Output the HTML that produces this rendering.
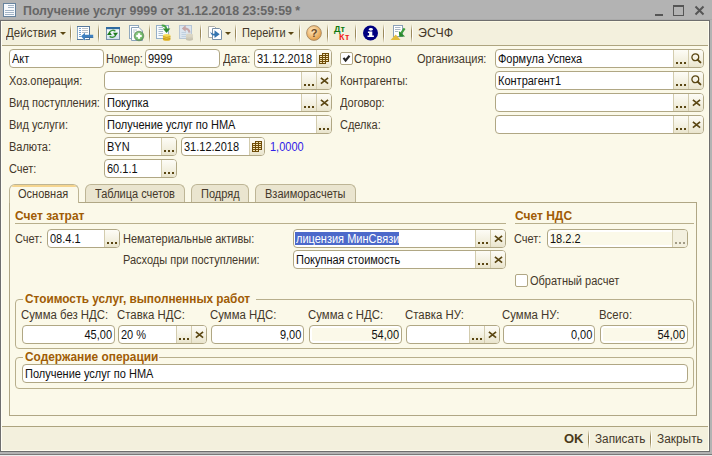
<!DOCTYPE html><html><head><meta charset="utf-8"><style>
*{margin:0;padding:0;box-sizing:border-box}
html,body{width:712px;height:456px;overflow:hidden;background:#B3B3B3;font-family:"Liberation Sans",sans-serif;font-size:11px}
.lb,.ttl,.gt{position:absolute;white-space:nowrap;color:#44382A}
.frame{position:absolute;left:0;top:20px;width:710px;height:432px;border:1px solid #6E6E6E;background:#FBF9E9}
.tb{position:absolute;left:1px;top:21px;width:708px;height:25px;box-shadow:inset 0 1px 0 #FCF9E4;background:#F3F0DD;border-bottom:1px solid #ADA47F}
.bb{position:absolute;left:1px;top:426px;width:708px;height:25px;background:#F3F0DD;border-top:1px solid #ADA47F}
.f{position:absolute;border:1px solid #B0A784;border-radius:4px;background:#fff;overflow:hidden}
.f.ro{background:#FBF9E9;box-shadow:inset 0 0 0 2px #fff}
.ft{position:absolute;left:2px;top:0;height:17px;line-height:17px;color:#101010;white-space:nowrap;overflow:hidden}
.sel{background:#4C69CA;color:#fff;display:inline-block;height:13px;line-height:13px;margin-top:2px;padding-left:1px;margin-left:-1px}
.bt{position:absolute;top:0;width:15px;height:17px;border-left:1px solid #D3CCAE;background:linear-gradient(#FDFCF6,#F3F0E0 60%,#E9E4CC)}
.bt.rob{background:#F3F0DF}
.dt{position:absolute;width:2px;height:2px}
.ic{position:absolute}
.cb{position:absolute;width:13px;height:13px;border:1px solid #B0A784;border-radius:2px;background:#fff}
.tab{position:absolute;top:184px;height:18px;border:1px solid #BDB595;border-bottom:none;border-radius:6px 6px 0 0;background:#EAE5CF}
.tab.act{background:#FBF9E9;height:19px;z-index:1}
.lb{z-index:3}
.panel{position:absolute;left:9px;top:202px;width:688px;height:214px;border:1px solid #B0A785}
.grp{position:absolute;border:1px solid #B8AF8C;border-radius:4px}
.hl{position:absolute;height:1px;background:#B8AF8C}
.sep{position:absolute;top:24px;width:2px;height:19px;background:linear-gradient(90deg,transparent 0 0),linear-gradient(rgba(150,132,85,0),rgba(150,132,85,.95) 35%,rgba(150,132,85,.95) 65%,rgba(150,132,85,0)) 0 0/1px 100% no-repeat,linear-gradient(rgba(255,255,255,0),#fff 30%,#fff 70%,rgba(255,255,255,0)) 1px 0/1px 100% no-repeat}
</style></head><body>
<svg style="position:absolute;left:0;top:0" width="20" height="20" viewBox="0 0 20 20">
<rect x="3.5" y="3.5" width="12" height="13" fill="#F7F9FC" stroke="#67839E"/>
<path d="M8 5.5H14M8 7.5H14M5 10.5H14M5 12.5H14M5 14.5H14" stroke="#A3B4C6"/>
</svg>
<div class="ttl" style="top:5px;line-height:13px;font-size:12.5px;transform:scaleX(0.988);transform-origin:0 0;left:23px;font-weight:bold;color:#666666;">Получение услуг 9999 от 31.12.2018 23:59:59 *</div>
<div style="position:absolute;left:655px;top:14px;width:8px;height:2px;background:#555"></div>
<div style="position:absolute;left:673px;top:5px;width:11px;height:11px;border:1px solid #555;border-top-width:2px"></div>
<svg style="position:absolute;left:694px;top:5px" width="11" height="11" viewBox="0 0 11 11"><path d="M1.5 1.5L9.5 9.5M9.5 1.5L1.5 9.5" stroke="#555" stroke-width="2"/></svg>
<div style="position:absolute;left:0;top:19px;width:712px;height:1px;background:#AAAAAA"></div>
<div class="frame"></div>
<div class="tb"></div>
<div class="bb"></div>
<div style="position:absolute;left:1px;top:21px;width:708px;height:430px;box-shadow:inset 1px 0 0 #FFFEF4,inset -1px -1px 0 #FFFDEE;z-index:5"></div>
<div style="position:absolute;left:0;top:454px;width:712px;height:1px;background:#7A7A7A"></div><div style="position:absolute;left:0;top:455px;width:712px;height:1px;background:#EDEDED"></div>
<div class="lb" style="top:27px;line-height:13px;font-size:12px;transform:scaleX(0.96);left:6px;transform-origin:0 0;color:#44382A;">Действия</div>
<svg class="ic" style="left:60px;top:32px" width="6" height="3"><path d="M0 0H6L3 3Z" fill="#5A4612"/></svg>
<div class="sep" style="left:70px"></div>
<div class="sep" style="left:98px"></div>
<div class="sep" style="left:149px"></div>
<div class="sep" style="left:200px"></div>
<div class="sep" style="left:235px"></div>
<div class="sep" style="left:299px"></div>
<div class="sep" style="left:327px"></div>
<div class="sep" style="left:355px"></div>
<div class="sep" style="left:383px"></div>
<div class="sep" style="left:411px"></div>
<svg class="ic" style="left:74px;top:23px" width="22" height="20" viewBox="0 0 22 20">
<rect x="3.5" y="3.5" width="12" height="13" fill="#FFFFFF" stroke="#86A6C6"/>
<path d="M3 3.5H16M15.5 3V17M3 16.5H9M12 16.5H16" stroke="#56789C" stroke-width="1"/>
<path d="M5 5.5H7M5 7.5H7M5 9.5H7M5 11.5H7M5 13.5H7" stroke="#78A2D0"/>
<path d="M8 5.5H14M8 7.5H14M8 9.5H14" stroke="#BAC0C6"/>
<path d="M7 13.3L11 9.8V11.8H19.2V14.8H11V17.6Z" fill="#3F80C0"/>
<path d="M11 14H19.2V14.8H11Z" fill="#2E66A0"/>
</svg>
<svg class="ic" style="left:102px;top:23px" width="22" height="20" viewBox="0 0 22 20">
<defs><linearGradient id="wg" x1="0" y1="0" x2="0" y2="1"><stop offset="0" stop-color="#FFFFFF"/><stop offset="1" stop-color="#CFE0F0"/></linearGradient></defs>
<rect x="4.5" y="4.5" width="13" height="12" fill="url(#wg)" stroke="#7B93AB"/>
<rect x="4" y="4" width="14" height="2.2" fill="#2F6AA0"/>
<path d="M7.6 9.2A3.9 3.9 0 0 1 13.4 8.2" fill="none" stroke="#3C963C" stroke-width="1.4"/>
<path d="M13.4 12.6A3.9 3.9 0 0 1 7.6 13.4" fill="none" stroke="#3C963C" stroke-width="1.4"/>
<path d="M5 11.9L7.45 8.6L9.9 11.9Z" fill="#1A7A1A"/>
<path d="M11 9.8H16L13.5 13.3Z" fill="#1A7A1A"/>
</svg>
<svg class="ic" style="left:124px;top:22px" width="24" height="22" viewBox="0 0 24 22">
<defs><radialGradient id="pg" cx="0.45" cy="0.45" r="0.6"><stop offset="0" stop-color="#B8E0B0"/><stop offset="0.6" stop-color="#78BE70"/><stop offset="1" stop-color="#4E9848"/></radialGradient></defs>
<rect x="5.5" y="3.5" width="9" height="13" fill="#FFFFFF" stroke="#90A8BE"/>
<path d="M7.5 5.5H15L18.5 9V18.5H7.5Z" fill="#FFFFFF" stroke="#8AA2BA"/>
<path d="M9 8H13M9 10H11" stroke="#B8C4D0"/>
<circle cx="15" cy="14" r="4.8" fill="url(#pg)" stroke="#6A8E68" stroke-width="0.8"/>
<path d="M15 11.3V16.7M12.3 14H17.7" stroke="#FFFFFF" stroke-width="2.1"/>
</svg>
<svg class="ic" style="left:152px;top:22px" width="24" height="22" viewBox="0 0 24 22">
<rect x="4.5" y="3.5" width="12" height="13" fill="#F8FBFD" stroke="#95AFC8"/>
<path d="M6.5 5.5H11M6.5 7.5H11M6.5 9.5H11M6.5 11.5H11M6.5 13.5H11" stroke="#A9BDD0"/>
<path d="M9.7 3.6Q13.5 3 14.5 7" fill="none" stroke="#48A448" stroke-width="1.8"/>
<path d="M10.8 6.6H18.3L14.5 11Z" fill="#2E8A2E"/>
<ellipse cx="14.7" cy="17.2" rx="3.8" ry="1.6" fill="#E0B020"/>
<ellipse cx="14.7" cy="15.4" rx="3.8" ry="1.6" fill="#F2CC38"/>
<ellipse cx="14.7" cy="13.6" rx="3.8" ry="1.6" fill="#F8DC58"/>
<path d="M10.9 14.5Q14.7 16.2 18.5 14.5M10.9 16.3Q14.7 18 18.5 16.3" fill="none" stroke="#B88A18" stroke-width="0.7"/>
</svg>
<svg class="ic" style="left:176px;top:22px" width="24" height="22" viewBox="0 0 24 22">
<rect x="3.5" y="3.5" width="12" height="13" fill="#DCE5EE" stroke="#B7C6D5"/>
<path d="M5.5 10.5H10M5.5 12.5H10M5.5 14.5H10" stroke="#BFD0E0"/>
<path d="M13.5 10.6Q13 6.5 8.5 6.5" fill="none" stroke="#C8A8A8" stroke-width="2.2"/>
<path d="M5.8 6.4L9.7 3.1V9.7Z" fill="#C6A6A6"/>
<ellipse cx="13.5" cy="17" rx="3.6" ry="1.7" fill="#C7C2B0"/>
<ellipse cx="13.5" cy="15.1" rx="3.6" ry="1.7" fill="#D2CDBB"/>
<ellipse cx="13.5" cy="13.2" rx="3.6" ry="1.7" fill="#DAD5C4"/>
</svg>
<svg class="ic" style="left:204px;top:22px" width="22" height="22" viewBox="0 0 22 22">
<path d="M4.5 4.5H10.5L12 6V15.5H4.5Z" fill="#FFFFFF" stroke="#B0B0A8"/>
<path d="M8.5 6.5H15.5L17.5 8.5V17.5H8.5Z" fill="#FFFFFF" stroke="#7890A8"/>
<path d="M6.3 9.6Q7.5 12.3 10.5 11.5V8.3L15.7 12.3L10.5 15.9V13.4Q7 14 6.3 9.6Z" fill="#3575B0"/>
</svg>
<svg class="ic" style="left:225px;top:32px" width="6" height="3"><path d="M0 0H6L3 3Z" fill="#5A4612"/></svg>
<div class="lb" style="top:27px;line-height:13px;font-size:12px;transform:scaleX(0.9167);left:242px;transform-origin:0 0;">Перейти</div>
<svg class="ic" style="left:288px;top:32px" width="6" height="3"><path d="M0 0H6L3 3Z" fill="#5A4612"/></svg>
<svg class="ic" style="left:306px;top:25px" width="16" height="16" viewBox="0 0 16 16">
<defs><radialGradient id="hg" cx="0.4" cy="0.35" r="0.7"><stop offset="0" stop-color="#FFE9C2"/><stop offset="1" stop-color="#E3993F"/></radialGradient></defs>
<circle cx="8" cy="8" r="7.4" fill="url(#hg)" stroke="#9A8060" stroke-width="0.8"/>
<text x="8" y="12.2" text-anchor="middle" font-family="Liberation Sans" font-weight="bold" font-size="11" fill="#6A4A28">?</text>
</svg>
<div class="lb" style="left:334px;top:24px;font-size:9px;font-weight:bold;color:#0F7A0F;line-height:10px">Дт</div>
<div class="lb" style="left:339px;top:32px;font-size:9px;font-weight:bold;color:#F01E1E;line-height:10px;letter-spacing:0.6px">Кт</div>
<svg class="ic" style="left:363px;top:25px" width="16" height="16" viewBox="0 0 16 16">
<circle cx="7.5" cy="8" r="7.5" fill="#000080"/>
<ellipse cx="7.9" cy="4.3" rx="2" ry="1.4" fill="#fff"/>
<path d="M4.9 6.5H9.3V10.5H10.9V12H4.5V10.5H6.1V8H4.9Z" fill="#fff"/>
</svg>
<svg class="ic" style="left:386px;top:22px" width="24" height="22" viewBox="0 0 24 22">
<rect x="7.5" y="3.5" width="9" height="11" fill="#FFFFFF" stroke="#8AA0B8"/>
<path d="M9 5.5H14.5M9 7.5H14.5M9 9.5H12" stroke="#A9B6C4"/>
<path d="M4.6 17.9L9.7 12.6L14.5 17.9Z" fill="#E2BC3C"/>
<path d="M18.6 6.3L15 11.5" stroke="#3F9F3F" stroke-width="2.2"/>
<path d="M12.8 8.9L13.3 14.7L19.1 14.4Z" fill="#2A8A2A"/>
</svg>
<div class="lb" style="top:27px;line-height:13px;font-size:12px;transform:scaleX(1.03);left:418px;transform-origin:0 0;">ЭСЧФ</div>
<div class="f" style="left:9px;top:49px;width:95px;height:19px">
</div>
<div class="lb" style="top:53px;line-height:13px;font-size:12px;transform:scaleX(0.9167);left:12px;transform-origin:0 0;color:#101010;">Акт</div>
<div class="lb" style="top:53px;line-height:13px;font-size:12px;transform:scaleX(0.9167);left:106px;transform-origin:0 0;">Номер:</div>
<div class="f" style="left:145px;top:49px;width:75px;height:19px">
</div>
<div class="lb" style="top:53px;line-height:13px;font-size:12px;transform:scaleX(0.9167);left:148px;transform-origin:0 0;color:#101010;">9999</div>
<div class="lb" style="top:53px;line-height:13px;font-size:12px;transform:scaleX(0.9167);left:223px;transform-origin:0 0;">Дата:</div>
<div class="f" style="left:254px;top:49px;width:78px;height:19px">
<div class="bt" style="left:61px;">
<svg class="ic" style="left:2px;top:3px" width="11" height="11" viewBox="0 0 11 11" shape-rendering="crispEdges"><path d="M3 0H10V9H7V11H0V2H3Z" fill="#6E4C08"/><rect x="4" y="1" width="2" height="1" fill="#F3E3B3"/><rect x="7" y="1" width="2" height="1" fill="#F3E3B3"/><rect x="1" y="3" width="2" height="1" fill="#F3E3B3"/><rect x="4" y="3" width="2" height="1" fill="#F3E3B3"/><rect x="7" y="3" width="2" height="1" fill="#F3E3B3"/><rect x="1" y="5" width="2" height="1" fill="#F3E3B3"/><rect x="4" y="5" width="2" height="1" fill="#F3E3B3"/><rect x="7" y="5" width="2" height="1" fill="#F3E3B3"/><rect x="1" y="7" width="2" height="1" fill="#F3E3B3"/><rect x="4" y="7" width="2" height="1" fill="#F3E3B3"/><rect x="7" y="7" width="2" height="1" fill="#F3E3B3"/><rect x="1" y="9" width="2" height="1" fill="#F3E3B3"/><rect x="4" y="9" width="2" height="1" fill="#F3E3B3"/></svg>
</div>
</div>
<div class="lb" style="top:53px;line-height:13px;font-size:12px;transform:scaleX(0.9167);left:257px;transform-origin:0 0;color:#101010;">31.12.2018</div>
<div class="cb" style="left:340px;top:52px">
<svg width="11" height="11" viewBox="0 0 11 11" style="position:absolute;left:0;top:0"><path d="M2.5 4.9L4.6 7.5L8.5 2.7" fill="none" stroke="#262626" stroke-width="2.2"/></svg>
</div>
<div class="lb" style="top:53px;line-height:13px;font-size:12px;transform:scaleX(0.9167);left:354px;transform-origin:0 0;">Сторно</div>
<div class="lb" style="top:53px;line-height:13px;font-size:12px;transform:scaleX(0.9167);left:417px;transform-origin:0 0;">Организация:</div>
<div class="f" style="left:495px;top:49px;width:209px;height:19px">
<div class="bt" style="left:177px;">
<i class="dt" style="left:2px;top:12px;background:#5A4612"></i><i class="dt" style="left:6px;top:12px;background:#5A4612"></i><i class="dt" style="left:10px;top:12px;background:#5A4612"></i>
</div>
<div class="bt" style="left:192px;">
<svg class="ic" style="left:2px;top:3px" width="11" height="11" viewBox="0 0 11 11"><circle cx="4.3" cy="4.3" r="3.4" fill="none" stroke="#5A4612" stroke-width="1.3"/><path d="M6.6 6.6L9.4 9.4" stroke="#5A4612" stroke-width="2" stroke-linecap="round"/></svg>
</div>
</div>
<div class="lb" style="top:53px;line-height:13px;font-size:12px;transform:scaleX(0.9167);left:498px;transform-origin:0 0;color:#101010;">Формула Успеха</div>
<div class="lb" style="top:75px;line-height:13px;font-size:12px;transform:scaleX(0.9167);left:9px;transform-origin:0 0;">Хоз.операция:</div>
<div class="f" style="left:104px;top:71px;width:228px;height:19px">
<div class="bt" style="left:196px;">
<i class="dt" style="left:2px;top:12px;background:#5A4612"></i><i class="dt" style="left:6px;top:12px;background:#5A4612"></i><i class="dt" style="left:10px;top:12px;background:#5A4612"></i>
</div>
<div class="bt" style="left:211px;">
<svg class="ic" style="left:3px;top:5px" width="9" height="8" viewBox="0 0 9 8"><path d="M0.9 0.9L8.1 6.6M8.1 0.9L0.9 6.6" stroke="#5A4612" stroke-width="1.7"/></svg>
</div>
</div>
<div class="lb" style="top:75px;line-height:13px;font-size:12px;transform:scaleX(0.9167);left:340px;transform-origin:0 0;">Контрагенты:</div>
<div class="f" style="left:495px;top:71px;width:209px;height:19px">
<div class="bt" style="left:177px;">
<i class="dt" style="left:2px;top:12px;background:#5A4612"></i><i class="dt" style="left:6px;top:12px;background:#5A4612"></i><i class="dt" style="left:10px;top:12px;background:#5A4612"></i>
</div>
<div class="bt" style="left:192px;">
<svg class="ic" style="left:2px;top:3px" width="11" height="11" viewBox="0 0 11 11"><circle cx="4.3" cy="4.3" r="3.4" fill="none" stroke="#5A4612" stroke-width="1.3"/><path d="M6.6 6.6L9.4 9.4" stroke="#5A4612" stroke-width="2" stroke-linecap="round"/></svg>
</div>
</div>
<div class="lb" style="top:75px;line-height:13px;font-size:12px;transform:scaleX(0.9167);left:498px;transform-origin:0 0;color:#101010;">Контрагент1</div>
<div class="lb" style="top:97px;line-height:13px;font-size:12px;transform:scaleX(0.9167);left:9px;transform-origin:0 0;">Вид поступления:</div>
<div class="f" style="left:104px;top:93px;width:228px;height:19px">
<div class="bt" style="left:196px;">
<i class="dt" style="left:2px;top:12px;background:#5A4612"></i><i class="dt" style="left:6px;top:12px;background:#5A4612"></i><i class="dt" style="left:10px;top:12px;background:#5A4612"></i>
</div>
<div class="bt" style="left:211px;">
<svg class="ic" style="left:3px;top:5px" width="9" height="8" viewBox="0 0 9 8"><path d="M0.9 0.9L8.1 6.6M8.1 0.9L0.9 6.6" stroke="#5A4612" stroke-width="1.7"/></svg>
</div>
</div>
<div class="lb" style="top:97px;line-height:13px;font-size:12px;transform:scaleX(0.9167);left:107px;transform-origin:0 0;color:#101010;">Покупка</div>
<div class="lb" style="top:97px;line-height:13px;font-size:12px;transform:scaleX(0.9167);left:340px;transform-origin:0 0;">Договор:</div>
<div class="f" style="left:495px;top:93px;width:209px;height:19px">
<div class="bt" style="left:177px;">
<i class="dt" style="left:2px;top:12px;background:#5A4612"></i><i class="dt" style="left:6px;top:12px;background:#5A4612"></i><i class="dt" style="left:10px;top:12px;background:#5A4612"></i>
</div>
<div class="bt" style="left:192px;">
<svg class="ic" style="left:3px;top:5px" width="9" height="8" viewBox="0 0 9 8"><path d="M0.9 0.9L8.1 6.6M8.1 0.9L0.9 6.6" stroke="#5A4612" stroke-width="1.7"/></svg>
</div>
</div>
<div class="lb" style="top:119px;line-height:13px;font-size:12px;transform:scaleX(0.9167);left:9px;transform-origin:0 0;">Вид услуги:</div>
<div class="f" style="left:104px;top:115px;width:228px;height:19px">
<div class="bt" style="left:211px;">
<i class="dt" style="left:2px;top:12px;background:#5A4612"></i><i class="dt" style="left:6px;top:12px;background:#5A4612"></i><i class="dt" style="left:10px;top:12px;background:#5A4612"></i>
</div>
</div>
<div class="lb" style="top:119px;line-height:13px;font-size:12px;transform:scaleX(0.9167);left:107px;transform-origin:0 0;color:#101010;">Получение услуг по НМА</div>
<div class="lb" style="top:119px;line-height:13px;font-size:12px;transform:scaleX(0.9167);left:340px;transform-origin:0 0;">Сделка:</div>
<div class="f" style="left:495px;top:115px;width:209px;height:19px">
<div class="bt" style="left:177px;">
<i class="dt" style="left:2px;top:12px;background:#5A4612"></i><i class="dt" style="left:6px;top:12px;background:#5A4612"></i><i class="dt" style="left:10px;top:12px;background:#5A4612"></i>
</div>
<div class="bt" style="left:192px;">
<svg class="ic" style="left:3px;top:5px" width="9" height="8" viewBox="0 0 9 8"><path d="M0.9 0.9L8.1 6.6M8.1 0.9L0.9 6.6" stroke="#5A4612" stroke-width="1.7"/></svg>
</div>
</div>
<div class="lb" style="top:141px;line-height:13px;font-size:12px;transform:scaleX(0.9167);left:9px;transform-origin:0 0;">Валюта:</div>
<div class="f" style="left:104px;top:137px;width:73px;height:19px">
<div class="bt" style="left:56px;">
<i class="dt" style="left:2px;top:12px;background:#5A4612"></i><i class="dt" style="left:6px;top:12px;background:#5A4612"></i><i class="dt" style="left:10px;top:12px;background:#5A4612"></i>
</div>
</div>
<div class="lb" style="top:141px;line-height:13px;font-size:12px;transform:scaleX(0.9167);left:107px;transform-origin:0 0;color:#101010;">BYN</div>
<div class="f" style="left:181px;top:137px;width:84px;height:19px">
<div class="bt" style="left:67px;">
<svg class="ic" style="left:2px;top:3px" width="11" height="11" viewBox="0 0 11 11" shape-rendering="crispEdges"><path d="M3 0H10V9H7V11H0V2H3Z" fill="#6E4C08"/><rect x="4" y="1" width="2" height="1" fill="#F3E3B3"/><rect x="7" y="1" width="2" height="1" fill="#F3E3B3"/><rect x="1" y="3" width="2" height="1" fill="#F3E3B3"/><rect x="4" y="3" width="2" height="1" fill="#F3E3B3"/><rect x="7" y="3" width="2" height="1" fill="#F3E3B3"/><rect x="1" y="5" width="2" height="1" fill="#F3E3B3"/><rect x="4" y="5" width="2" height="1" fill="#F3E3B3"/><rect x="7" y="5" width="2" height="1" fill="#F3E3B3"/><rect x="1" y="7" width="2" height="1" fill="#F3E3B3"/><rect x="4" y="7" width="2" height="1" fill="#F3E3B3"/><rect x="7" y="7" width="2" height="1" fill="#F3E3B3"/><rect x="1" y="9" width="2" height="1" fill="#F3E3B3"/><rect x="4" y="9" width="2" height="1" fill="#F3E3B3"/></svg>
</div>
</div>
<div class="lb" style="top:141px;line-height:13px;font-size:12px;transform:scaleX(0.9167);left:184px;transform-origin:0 0;color:#101010;">31.12.2018</div>
<div class="lb" style="top:141px;line-height:13px;font-size:12px;transform:scaleX(0.9167);left:270px;transform-origin:0 0;color:#3020E8;">1,0000</div>
<div class="lb" style="top:163px;line-height:13px;font-size:12px;transform:scaleX(0.9167);left:9px;transform-origin:0 0;">Счет:</div>
<div class="f" style="left:104px;top:159px;width:73px;height:19px">
<div class="bt" style="left:56px;">
<i class="dt" style="left:2px;top:12px;background:#5A4612"></i><i class="dt" style="left:6px;top:12px;background:#5A4612"></i><i class="dt" style="left:10px;top:12px;background:#5A4612"></i>
</div>
</div>
<div class="lb" style="top:163px;line-height:13px;font-size:12px;transform:scaleX(0.9167);left:107px;transform-origin:0 0;color:#101010;">60.1.1</div>
<div class="panel"></div>
<div class="tab act" style="left:9px;width:70px"><div style="position:absolute;left:2px;right:2px;top:0;height:2px;background:#F5D58F;border-radius:3px 3px 0 0"></div></div>
<div class="tab" style="left:85px;width:100px"></div>
<div class="tab" style="left:191px;width:58px"></div>
<div class="tab" style="left:255px;width:101px"></div>
<div class="lb" style="top:188px;line-height:13px;font-size:12px;transform:scaleX(0.9167);left:18px;transform-origin:0 0;">Основная</div>
<div class="lb" style="top:188px;line-height:13px;font-size:12px;transform:scaleX(0.9167);left:95px;transform-origin:0 0;">Таблица счетов</div>
<div class="lb" style="top:188px;line-height:13px;font-size:12px;transform:scaleX(0.9167);left:201px;transform-origin:0 0;">Подряд</div>
<div class="lb" style="top:188px;line-height:13px;font-size:12px;transform:scaleX(0.9167);left:265px;transform-origin:0 0;">Взаиморасчеты</div>
<div class="gt" style="top:210px;line-height:13px;font-size:12px;left:15px;font-weight:bold;color:#A05C05;">Счет затрат</div>
<div class="hl" style="left:15px;top:223px;width:491px"></div>
<div class="gt" style="top:210px;line-height:13px;font-size:12px;left:515px;font-weight:bold;color:#A05C05;">Счет НДС</div>
<div class="hl" style="left:515px;top:223px;width:179px"></div>
<div class="lb" style="top:233px;line-height:13px;font-size:12px;transform:scaleX(0.9167);left:15px;transform-origin:0 0;">Счет:</div>
<div class="f" style="left:47px;top:229px;width:73px;height:19px">
<div class="bt" style="left:56px;">
<i class="dt" style="left:2px;top:12px;background:#5A4612"></i><i class="dt" style="left:6px;top:12px;background:#5A4612"></i><i class="dt" style="left:10px;top:12px;background:#5A4612"></i>
</div>
</div>
<div class="lb" style="top:233px;line-height:13px;font-size:12px;transform:scaleX(0.9167);left:50px;transform-origin:0 0;color:#101010;">08.4.1</div>
<div class="lb" style="top:233px;line-height:13px;font-size:12px;transform:scaleX(0.9167);left:123px;transform-origin:0 0;">Нематериальные активы:</div>
<div class="f" style="left:293px;top:229px;width:213px;height:19px">
<div class="bt" style="left:181px;">
<i class="dt" style="left:2px;top:12px;background:#5A4612"></i><i class="dt" style="left:6px;top:12px;background:#5A4612"></i><i class="dt" style="left:10px;top:12px;background:#5A4612"></i>
</div>
<div class="bt" style="left:196px;">
<svg class="ic" style="left:3px;top:5px" width="9" height="8" viewBox="0 0 9 8"><path d="M0.9 0.9L8.1 6.6M8.1 0.9L0.9 6.6" stroke="#5A4612" stroke-width="1.7"/></svg>
</div>
</div>
<div style="position:absolute;left:295px;top:232px;width:104px;height:13px;background:#4C69CA"></div>
<div class="lb" style="top:233px;line-height:13px;font-size:12px;transform:scaleX(0.9167);left:296px;transform-origin:0 0;color:#fff;">лицензия МинСвязи</div>
<div class="lb" style="top:254px;line-height:13px;font-size:12px;transform:scaleX(0.9167);left:123px;transform-origin:0 0;">Расходы при поступлении:</div>
<div class="f" style="left:293px;top:250px;width:213px;height:19px">
<div class="bt" style="left:181px;">
<i class="dt" style="left:2px;top:12px;background:#5A4612"></i><i class="dt" style="left:6px;top:12px;background:#5A4612"></i><i class="dt" style="left:10px;top:12px;background:#5A4612"></i>
</div>
<div class="bt" style="left:196px;">
<svg class="ic" style="left:3px;top:5px" width="9" height="8" viewBox="0 0 9 8"><path d="M0.9 0.9L8.1 6.6M8.1 0.9L0.9 6.6" stroke="#5A4612" stroke-width="1.7"/></svg>
</div>
</div>
<div class="lb" style="top:254px;line-height:13px;font-size:12px;transform:scaleX(0.9167);left:296px;transform-origin:0 0;color:#101010;">Покупная стоимость</div>
<div class="lb" style="top:233px;line-height:13px;font-size:12px;transform:scaleX(0.9167);left:514px;transform-origin:0 0;">Счет:</div>
<div class="f ro" style="left:547px;top:229px;width:141px;height:19px">
<div class="bt rob" style="left:124px;">
<i class="dt" style="left:2px;top:12px;background:#A29C86"></i><i class="dt" style="left:6px;top:12px;background:#A29C86"></i><i class="dt" style="left:10px;top:12px;background:#A29C86"></i>
</div>
</div>
<div class="lb" style="top:233px;line-height:13px;font-size:12px;transform:scaleX(0.9167);left:550px;transform-origin:0 0;color:#101010;">18.2.2</div>
<div class="cb" style="left:515px;top:274px">
</div>
<div class="lb" style="top:275px;line-height:13px;font-size:12px;transform:scaleX(0.9167);left:530px;transform-origin:0 0;">Обратный расчет</div>
<div class="grp" style="left:15px;top:299px;width:679px;height:50px"></div>
<div style="position:absolute;left:23px;top:294px;width:233px;height:10px;background:#FBF9E9"></div>
<div class="gt" style="top:293px;line-height:13px;font-size:12px;transform:scaleX(0.985);transform-origin:0 0;left:25px;font-weight:bold;color:#A05C05;">Стоимость услуг, выполненных работ</div>
<div class="lb" style="top:309px;line-height:13px;font-size:12px;transform:scaleX(0.95);left:21px;transform-origin:0 0;">Сумма без НДС:</div>
<div class="lb" style="top:309px;line-height:13px;font-size:12px;transform:scaleX(0.95);left:117px;transform-origin:0 0;">Ставка НДС:</div>
<div class="lb" style="top:309px;line-height:13px;font-size:12px;transform:scaleX(0.95);left:210px;transform-origin:0 0;">Сумма НДС:</div>
<div class="lb" style="top:309px;line-height:13px;font-size:12px;transform:scaleX(0.95);left:308px;transform-origin:0 0;">Сумма с НДС:</div>
<div class="lb" style="top:309px;line-height:13px;font-size:12px;transform:scaleX(0.95);left:405px;transform-origin:0 0;">Ставка НУ:</div>
<div class="lb" style="top:309px;line-height:13px;font-size:12px;transform:scaleX(0.95);left:502px;transform-origin:0 0;">Сумма НУ:</div>
<div class="lb" style="top:309px;line-height:13px;font-size:12px;transform:scaleX(0.95);left:599px;transform-origin:0 0;">Всего:</div>
<div class="f" style="left:22px;top:325px;width:93px;height:19px">
</div>
<div class="lb" style="top:329px;line-height:13px;font-size:12px;transform:scaleX(0.9167);right:600px;transform-origin:100% 0;color:#101010;">45,00</div>
<div class="f" style="left:118px;top:325px;width:89px;height:19px">
<div class="bt" style="left:57px;">
<i class="dt" style="left:2px;top:12px;background:#5A4612"></i><i class="dt" style="left:6px;top:12px;background:#5A4612"></i><i class="dt" style="left:10px;top:12px;background:#5A4612"></i>
</div>
<div class="bt" style="left:72px;">
<svg class="ic" style="left:3px;top:5px" width="9" height="8" viewBox="0 0 9 8"><path d="M0.9 0.9L8.1 6.6M8.1 0.9L0.9 6.6" stroke="#5A4612" stroke-width="1.7"/></svg>
</div>
</div>
<div class="lb" style="top:329px;line-height:13px;font-size:12px;transform:scaleX(0.9167);left:121px;transform-origin:0 0;color:#101010;">20 %</div>
<div class="f" style="left:211px;top:325px;width:93px;height:19px">
</div>
<div class="lb" style="top:329px;line-height:13px;font-size:12px;transform:scaleX(0.9167);right:411px;transform-origin:100% 0;color:#101010;">9,00</div>
<div class="f ro" style="left:309px;top:325px;width:93px;height:19px">
</div>
<div class="lb" style="top:329px;line-height:13px;font-size:12px;transform:scaleX(0.9167);right:313px;transform-origin:100% 0;color:#101010;">54,00</div>
<div class="f" style="left:406px;top:325px;width:94px;height:19px">
<div class="bt" style="left:62px;">
<i class="dt" style="left:2px;top:12px;background:#5A4612"></i><i class="dt" style="left:6px;top:12px;background:#5A4612"></i><i class="dt" style="left:10px;top:12px;background:#5A4612"></i>
</div>
<div class="bt" style="left:77px;">
<svg class="ic" style="left:3px;top:5px" width="9" height="8" viewBox="0 0 9 8"><path d="M0.9 0.9L8.1 6.6M8.1 0.9L0.9 6.6" stroke="#5A4612" stroke-width="1.7"/></svg>
</div>
</div>
<div class="f" style="left:503px;top:325px;width:92px;height:19px">
</div>
<div class="lb" style="top:329px;line-height:13px;font-size:12px;transform:scaleX(0.9167);right:120px;transform-origin:100% 0;color:#101010;">0,00</div>
<div class="f ro" style="left:600px;top:325px;width:88px;height:19px">
</div>
<div class="lb" style="top:329px;line-height:13px;font-size:12px;transform:scaleX(0.9167);right:27px;transform-origin:100% 0;color:#101010;">54,00</div>
<div class="grp" style="left:15px;top:357px;width:679px;height:32px"></div>
<div style="position:absolute;left:23px;top:352px;width:136px;height:10px;background:#FBF9E9"></div>
<div class="gt" style="top:351px;line-height:13px;font-size:12px;transform:scaleX(0.99);transform-origin:0 0;left:25px;font-weight:bold;color:#A05C05;">Содержание операции</div>
<div class="f" style="left:22px;top:364px;width:666px;height:19px">
</div>
<div class="lb" style="top:368px;line-height:13px;font-size:12px;transform:scaleX(0.9167);left:25px;transform-origin:0 0;color:#101010;">Получение услуг по НМА</div>
<div class="lb" style="top:432px;line-height:13px;font-size:13px;left:564px;font-weight:bold;color:#4A3A1A;">OK</div>
<div class="sep" style="left:588px;top:430px;height:19px"></div>
<div class="lb" style="top:433px;line-height:13px;font-size:12px;transform:scaleX(0.98);left:595px;transform-origin:0 0;">Записать</div>
<div class="sep" style="left:650px;top:430px;height:19px"></div>
<div class="lb" style="top:433px;line-height:13px;font-size:12px;transform:scaleX(0.99);left:657px;transform-origin:0 0;">Закрыть</div>
</body></html>
